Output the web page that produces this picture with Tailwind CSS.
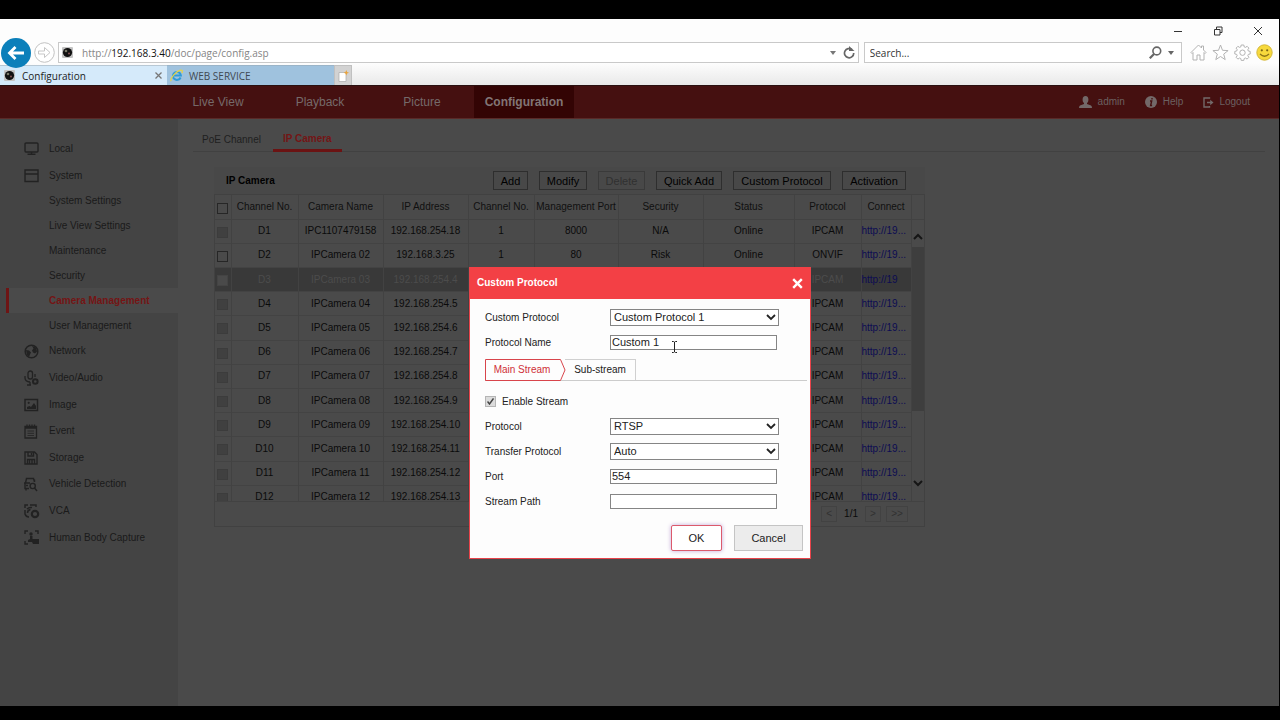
<!DOCTYPE html>
<html lang="en">
<head>
<meta charset="utf-8">
<meta name="viewport" content="width=device-width, initial-scale=1">
<title>Configuration</title>
<script src="https://cdn.jsdelivr.net/npm/@tailwindcss/browser@4"></script>
</head>
<body class="flex min-h-screen flex-col bg-black pt-[19px] pr-px pb-[14px] font-['Liberation_Sans',Arial,sans-serif] text-[10px] leading-4">

<!-- Browser window -->
<header class="bg-[#fdfdfd] font-['Open_Sans',sans-serif] text-[10px] text-[#222]">
  <div class="flex h-[23px] items-center justify-end gap-[30px] pr-[16px]">
    <button aria-label="Minimize"><svg class="block h-[10px] w-[10px]" viewBox="0 0 10 10"><path d="M1 5.500h8" stroke="#333" fill="none"/></svg></button>
    <button aria-label="Restore"><svg class="block h-[10px] w-[10px]" viewBox="0 0 10 10"><path d="M1.500 3.500h5.500v5.500h-5.500zM3.500 3.500v-2.500h5.500v5.500h-2" stroke="#333" fill="none"/></svg></button>
    <button aria-label="Close window"><svg class="block h-[10px] w-[10px]" viewBox="0 0 10 10"><path d="M1 1l8 8M9 1l-8 8" stroke="#333" fill="none"/></svg></button>
  </div>
  <div class="relative z-10 flex h-[21px] items-center pr-[6px]">
    <button aria-label="Back" class="-my-2 ml-px shrink-0"><svg class="block h-[30px] w-[30px]" viewBox="0 0 30 30"><circle cx="15" cy="15" r="15" fill="#0b7fba"/><path d="M23 15H9M14.500 9L8.500 15l6 6" stroke="#fff" stroke-width="2.800" fill="none"/></svg></button>
    <button aria-label="Forward" class="ml-[3px] shrink-0"><svg class="block h-[21px] w-[21px]" viewBox="0 0 21 21"><circle cx="10.500" cy="10.500" r="9.800" fill="#fff" stroke="#c2c2c2"/><path d="M4.500 9h6V5.500l5.500 5-5.500 5V12h-6z" stroke="#c6c6c6" fill="#fff"/></svg></button>
    <div class="ml-[3px] flex h-[21px] flex-1 items-center border border-[#c9c9c9] bg-white pl-[3px] pr-[3px]">
      <svg class="h-[11px] w-[11px]" viewBox="0 0 11 11"><rect width="11" height="11" rx="1" fill="#c4c4c4"/><circle cx="5.500" cy="5.500" r="4.600" fill="#111"/><circle cx="4" cy="4" r="1.300" fill="#776"/><circle cx="7" cy="6.500" r="1" fill="#855"/></svg>
      <p class="flex-1 pl-[9px] text-[#858585]">http://<span class="text-[#111]">192.168.3.40</span>/doc/page/config.asp</p>
      <button aria-label="Address history"><svg class="block h-1 w-[6px]" viewBox="0 0 6 4"><path d="M0 0h6L3 4z" fill="#777"/></svg></button>
      <button aria-label="Refresh" class="ml-[7px]"><svg class="block h-[13px] w-[12px]" viewBox="0 0 12 13"><path d="M9 3.600A4.600 4.600 0 1 0 10.700 7" fill="none" stroke="#666" stroke-width="1.700"/><path d="M6 0v5h5.500z" fill="#666"/></svg></button>
    </div>
    <div class="ml-[5px] flex h-[21px] w-1/4 items-center border border-[#c9c9c9] bg-white pl-[5px] pr-[7px]">
      <input aria-label="Search" placeholder="Search..." class="min-w-0 flex-1 placeholder:text-[#333] outline-none">
      <button aria-label="Run search"><svg class="block h-[13px] w-[13px]" viewBox="0 0 13 13"><circle cx="7.800" cy="5" r="3.900" fill="none" stroke="#666" stroke-width="1.600"/><path d="M5 8L.8 12.300" stroke="#666" stroke-width="2.200"/></svg></button>
      <button aria-label="Search options" class="ml-[6px]"><svg class="block h-1 w-[6px]" viewBox="0 0 6 4"><path d="M0 0h6L3 4z" fill="#666"/></svg></button>
    </div>
    <div class="ml-2 flex shrink-0 gap-[5px]">
      <button aria-label="Home"><svg class="block h-[17px] w-[17px]" viewBox="0 0 17 17"><path d="M8.500 1L1 8.500l1 1 1-1V16h4v-5h3v5h4V8.500l1 1 1-1-2.500-2.500V2h-2v2z" fill="#fff" stroke="#b3b3b3"/></svg></button>
      <button aria-label="Favorites"><svg class="block h-[17px] w-[17px]" viewBox="0 0 17 17"><path d="M8.500 1l2 5.300 5.600.3-4.400 3.500 1.500 5.500-4.700-3.100-4.700 3.100 1.500-5.500L.9 6.600l5.600-.3z" fill="#fff" stroke="#b3b3b3"/></svg></button>
      <button aria-label="Tools"><svg class="block h-[17px] w-[17px]" viewBox="0 0 17 17"><path d="M7.200 1h2.600l.4 1.900 1.300.5 1.600-1.100 1.800 1.800-1.100 1.600.5 1.300 1.900.4v2.600l-1.900.4-.5 1.300 1.100 1.600-1.800 1.800-1.600-1.100-1.300.5-.4 1.900H7.200l-.4-1.900-1.300-.5-1.600 1.100-1.800-1.800 1.100-1.600-.5-1.300L.8 10V7.400L2.700 7l.5-1.300-1.100-1.600 1.800-1.800 1.600 1.100 1.300-.5z" fill="#fff" stroke="#b3b3b3"/><circle cx="8.500" cy="8.700" r="2.700" fill="#fff" stroke="#b3b3b3"/></svg></button>
      <button aria-label="Feedback"><svg class="block h-[17px] w-[17px]" viewBox="0 0 17 17"><circle cx="8.500" cy="8.500" r="7.700" fill="#f7d93c" stroke="#d3b73a"/><circle cx="5.800" cy="6.300" r="1.100" fill="#7a6414"/><circle cx="11.200" cy="6.300" r="1.100" fill="#7a6414"/><path d="M4 10q4.500 4.500 9 0" fill="none" stroke="#8d7417" stroke-width="1.200"/></svg></button>
    </div>
  </div>
  <nav class="flex h-[22px] bg-linear-to-b from-[#fdfdfd] to-[#e9e9e9] pt-[2px]" aria-label="Browser tabs">
    <a href="#" class="flex w-[167px] items-center border-t border-[#b8c8d4] bg-[#d5eafa] pl-1">
      <svg class="h-[11px] w-[11px]" viewBox="0 0 11 11"><rect width="11" height="11" rx="1" fill="#c4c4c4"/><circle cx="5.500" cy="5.500" r="4.600" fill="#111"/><circle cx="4" cy="4" r="1.300" fill="#776"/><circle cx="7" cy="6.500" r="1" fill="#855"/></svg>
      <span class="flex-1 pl-[7px] text-[#222]">Configuration</span>
      <svg class="mr-[5px] h-[7px] w-[7px]" viewBox="0 0 7 7"><path d="M.5.500l6 6M6.500.500l-6 6" stroke="#777" stroke-width="1.300"/></svg>
    </a>
    <a href="#" class="flex w-[167px] items-center border-t border-[#9ab4c8] bg-[#9fc2de] pl-[3px] text-[#3f4a52]">
      <svg class="h-[13px] w-[13px]" viewBox="0 0 13 13"><path d="M10.600 8.500A4 4 0 1 1 10.900 6.500H4" fill="none" stroke="#2f9bd8" stroke-width="2"/><path d="M1.200 12.200C-.5 10 6 2 11 1.200c2-.2 1.400 2 .6 3" fill="none" stroke="#e4d24a" stroke-width="1.300"/></svg>
      <span class="pl-[6px]">WEB SERVICE</span>
    </a>
    <button aria-label="New tab" class="flex w-[18px] items-center justify-center border border-b-0 border-[#c0c0c0] bg-[#d2d2d2]">
      <svg class="h-[12px] w-[11px]" viewBox="0 0 11 12"><path d="M1 2.500h7v9H1z" fill="#fff" stroke="#aaa" stroke-width=".7"/><path d="M8.300 0l.8 2 1.900.8-1.900.8-.8 2-.8-2-1.900-.8 1.900-.8z" fill="#e9a33c"/></svg>
    </button>
  </nav>
</header>

<!-- Web page -->
<div class="relative flex flex-1 flex-col bg-[#4a4a4a]">
  <nav class="flex h-[34px] items-center justify-between border-t border-b border-t-[#2a1010] border-b-[#5a2a28] bg-[#451010] pr-[29px] pl-[168px] text-[#756a6a]" aria-label="Main">
    <div class="flex h-full gap-[2px] text-[12px]">
      <a href="#" class="flex w-[100px] items-center justify-center">Live View</a>
      <a href="#" class="flex w-[100px] items-center justify-center">Playback</a>
      <a href="#" class="flex w-[100px] items-center justify-center">Picture</a>
      <a href="#" class="flex w-[100px] items-center justify-center bg-[#330404] font-bold text-[#827575]">Configuration</a>
    </div>
    <div class="flex gap-5 text-[#6c6161]">
      <a href="#" class="flex items-center gap-[6px]"><svg class="h-[12px] w-[13px]" viewBox="0 0 13 12" fill="#736969"><ellipse cx="6.500" cy="3.700" rx="2.900" ry="3.600"/><path d="M5 6h3v2l4 1.500q1 .5 1 2.500H0Q0 10 1 9.500L5 8z"/></svg>admin</a>
      <a href="#" class="flex items-center gap-[6px]"><svg class="h-[12px] w-[12px]" viewBox="0 0 12 12"><circle cx="6" cy="6" r="6" fill="#736969"/><path d="M7 2v1.600M5 5h1.700L5.600 9.500h1.500" stroke="#451010" stroke-width="1.400" fill="none"/></svg>Help</a>
      <a href="#" class="flex items-center gap-[5px]"><svg class="h-[11px] w-[11px]" viewBox="0 0 11 11"><path d="M6.500 1.800V1H1v9h5.500V9" fill="none" stroke="#736969" stroke-width="1.400"/><path d="M4 4.800h3.200V2.800L10.500 5.500 7.200 8.200v-2H4z" fill="#736969"/></svg>Logout</a>
    </div>
  </nav>

  <div class="flex flex-1">
    <aside class="w-[178px] shrink-0 bg-[#444444] pt-4 text-[#1a1a1a]">
      <div class="grid h-[54px] auto-rows-fr">
        <a href="#" class="flex items-center gap-[10px] pl-6"><svg class="h-[15px] w-[15px]" viewBox="0 0 15 15" fill="none" stroke="#222" stroke-width="1.400"><rect x="1" y="2" width="13" height="9" rx="1"/><path d="M7.500 11v2M3.500 13.300h8"/></svg>Local</a>
        <a href="#" class="flex items-center gap-[10px] pl-6"><svg class="h-[15px] w-[15px]" viewBox="0 0 15 15" fill="none" stroke="#222" stroke-width="1.400"><path d="M1 2h13v11.500H1zM1 6h13"/></svg>System</a>
      </div>
      <div class="grid h-[149px] auto-rows-fr">
        <a href="#" class="flex items-center pl-[49px]">System Settings</a>
        <a href="#" class="flex items-center pl-[49px]">Live View Settings</a>
        <a href="#" class="flex items-center pl-[49px]">Maintenance</a>
        <a href="#" class="flex items-center pl-[49px]">Security</a>
        <a href="#" class="ml-[6px] flex items-center border-l-3 border-[#6e1414] bg-[#4a4a4a] pl-[40px] font-bold text-[#741515]">Camera Management</a>
        <a href="#" class="flex items-center pl-[49px]">User Management</a>
      </div>
      <div class="grid h-[213px] auto-rows-fr">
        <a href="#" class="flex items-center gap-[10px] pl-6"><svg class="h-[15px] w-[15px]" viewBox="0 0 15 15"><circle cx="7.500" cy="7.500" r="6.300" fill="none" stroke="#222" stroke-width="1.500"/><path d="M8 2l4 1.500 1 4-2 2-2-1-1-2 1.500-2zM2 6l3 .5 2 2-1 2-1 2.500-2-2z" fill="#222"/></svg>Network</a>
        <a href="#" class="flex items-center gap-[10px] pl-6"><svg class="h-[16px] w-[15px]" viewBox="0 0 15 16" fill="none" stroke="#222" stroke-width="1.300"><rect x="4" y="1" width="4.500" height="8" rx="2.200"/><path d="M1 6v2q0 3.500 5 4M11 4v3M6 12v3M3 15h4"/><circle cx="11.300" cy="11.500" r="2.300" stroke-width="2"/></svg>Video/Audio</a>
        <a href="#" class="flex items-center gap-[10px] pl-6"><svg class="h-[14px] w-[15px]" viewBox="0 0 15 14"><path d="M1 1.500h12.500v11H1z" fill="none" stroke="#222" stroke-width="1.500"/><path d="M3 11V9l2.500-1L7 9l3-4 2 3v3z" fill="#222"/><circle cx="4.700" cy="4.800" r="1.100" fill="#222"/></svg>Image</a>
        <a href="#" class="flex items-center gap-[10px] pl-6"><svg class="h-[15px] w-[15px]" viewBox="0 0 15 15" fill="none" stroke="#222" stroke-width="1.300"><path d="M1 2.500h11.500V14H1zM1 4h11.500M3 .5v3M5.500.500v3M8 .5v3M10.500.500v3"/><path d="M3.500 7h6.500M3.500 9.300h6.500M3.500 11.500h6.500" stroke-width=".8"/></svg>Event</a>
        <a href="#" class="flex items-center gap-[10px] pl-6"><svg class="h-[14px] w-[15px]" viewBox="0 0 15 14" fill="none" stroke="#222" stroke-width="1.400"><path d="M1 1h9.500L13 3.500V13H1zM4 1v4h5.500V1M3.500 13V8.500h7V13M5.500 9v4M8 9v4M7.500 2v2"/></svg>Storage</a>
        <a href="#" class="flex items-center gap-[10px] pl-6"><svg class="h-[15px] w-[15px]" viewBox="0 0 15 15" fill="none" stroke="#222" stroke-width="1.400"><path d="M1.500 6L2.500 1.500h7L10.500 5M0 6h6M1 6v5.500h4M2 11v2.500M2 8.500h2M10.500 2.500v2.500"/><circle cx="8.700" cy="9" r="2.600"/><path d="M10.500 11l2.500 3"/></svg>Vehicle Detection</a>
        <a href="#" class="flex items-center gap-[9px] pl-6"><svg class="h-[15px] w-[16px]" viewBox="0 0 16 15" fill="none" stroke="#222" stroke-width="1.500"><path d="M1 4V1h3M6 1h6v2M1 6v4q1 3 4 3M3 5q2-2 5-1.500M3.500 9q0-3 3-3.500"/><circle cx="11" cy="10" r="3.200" stroke-width="2.200"/></svg>VCA</a>
        <a href="#" class="flex items-center gap-[10px] pl-6"><svg class="h-[15px] w-[15px]" viewBox="0 0 15 15"><path d="M1 4V1h3M11 1h3v3M1 11v3h3" fill="none" stroke="#222" stroke-width="1.400"/><circle cx="7" cy="4" r="1.700" fill="#222"/><path d="M6 6h2.500v3H15v5H9l-1-2H4v-2l2-1z" fill="#222"/></svg>Human Body Capture</a>
      </div>
    </aside>

    <main class="min-w-0 flex-1 pr-[14px] pl-[15px]">
      <div class="flex h-[33px] items-end border-b border-[#414141] pl-[9px]">
        <a href="#" class="pb-[3px] text-[#1f1f1f]">PoE Channel</a>
        <a href="#" class="-mb-px ml-3 border-b-3 border-[#6b1313] px-[10px] pb-[2px] font-bold text-[#741515]">IP Camera</a>
      </div>

      <section class="mt-[15px] ml-[21px] w-[711px]">
        <div class="flex h-[27px] items-center bg-[#484848] pr-[19px] pl-3 text-[11px]">
          <h2 class="flex-1 text-[10px] font-bold text-black">IP Camera</h2>
          <div class="flex text-black">
            <button class="h-[19px] w-[35px] border border-[#2e2e2e]">Add</button>
            <button class="ml-[11px] h-[19px] w-[48px] border border-[#2e2e2e]">Modify</button>
            <button disabled class="ml-[11px] h-[19px] w-[47px] border border-[#3a3a3a] text-[#303030]">Delete</button>
            <button class="ml-[11px] h-[19px] w-[66px] border border-[#2e2e2e]">Quick Add</button>
            <button class="ml-[11px] h-[19px] w-[98px] border border-[#2e2e2e]">Custom Protocol</button>
            <button class="ml-[11px] h-[19px] w-[64px] border border-[#2e2e2e]">Activation</button>
          </div>
        </div>
        <div class="border border-[#414141]">
          <div class="flex h-[307px] overflow-hidden border-b border-[#424242]">
            <table class="h-[315px] w-[696px] shrink-0 table-fixed border-collapse text-center text-[#0a0a0a]">
              <colgroup><col class="w-[16px]"><col class="w-[67px]"><col class="w-[85px]"><col class="w-[85px]"><col class="w-[66px]"><col class="w-[84px]"><col class="w-[85px]"><col class="w-[91px]"><col class="w-[67px]"><col class="w-[50px]"></colgroup>
              <thead>
                <tr class="h-6 border-b border-[#424242] whitespace-nowrap text-[#101010] [&>th]:border-r [&>th]:border-[#424242] [&>th]:p-0 [&>th]:font-normal">
                  <th><input type="checkbox" aria-label="Select all" class="mt-[3px] ml-[2px] block h-[11px] w-[11px] appearance-none border border-[#262626]"></th>
                  <th>Channel No.</th><th>Camera Name</th><th>IP Address</th><th>Channel No.</th><th>Management Port</th><th>Security</th><th>Status</th><th>Protocol</th><th>Connect</th>
                </tr>
              </thead>
              <tbody id="cameras"></tbody>
            </table>
            <div class="flex flex-1 flex-col items-center pt-6">
              <button aria-label="Scroll up" class="flex h-[28px] w-full items-end justify-center border-t border-[#424242] pb-[7px]"><svg class="h-[7px] w-[10px]" viewBox="0 0 10 7"><path d="M1 6l4-4 4 4" fill="none" stroke="#151515" stroke-width="2"/></svg></button>
              <div class="h-[164px] w-full bg-[#3e3e3e]"></div>
              <button aria-label="Scroll down" class="mt-auto pb-[14px]"><svg class="block h-[7px] w-[10px]" viewBox="0 0 10 7"><path d="M1 1l4 4 4-4" fill="none" stroke="#151515" stroke-width="2"/></svg></button>
            </div>
          </div>
          <div class="flex h-[24px] items-center justify-end pr-4 text-[#313131]">
            <button class="h-[16px] w-[16px] border border-[#424242] leading-none">&lt;</button>
            <span class="px-[7px] text-[#0a0a0a]">1/1</span>
            <button class="h-[16px] w-[16px] border border-[#424242] leading-none">&gt;</button>
            <button class="ml-[5px] h-[16px] w-[22px] border border-[#424242] leading-none">&gt;&gt;</button>
          </div>
        </div>
      </section>
    </main>
  </div>

  <!-- Dialog over the page -->
  <div class="absolute inset-0 flex items-start justify-center pt-[182px] pl-px">
    <form role="dialog" aria-labelledby="dlg" class="w-[342px] border border-t-0 border-[#e8434a] bg-[#fdfdfd] text-[#222]">
      <div class="flex h-[32px] items-center justify-between bg-[#f34045] px-[7px]">
        <h2 id="dlg" class="font-bold text-white">Custom Protocol</h2>
        <button type="button" aria-label="Close"><svg class="block h-[11px] w-[11px]" viewBox="0 0 11 11"><path d="M1.200 1.200l8.600 8.600M9.800 1.200L1.200 9.800" stroke="#fff" stroke-width="2.400"/></svg></button>
      </div>
      <div class="px-[15px] pt-[6px] pb-[7px]">
        <div class="flex h-[25px] items-center">
          <label for="cp" class="w-[125px]">Custom Protocol</label>
          <span class="relative w-[169px]"><select id="cp" class="block h-[17px] w-full appearance-none border border-[#858585] bg-white pl-[3px] text-[11px] leading-[15px]"><option>Custom Protocol 1</option></select><svg class="pointer-events-none absolute top-[5px] right-[3px] h-[7px] w-[10px]" viewBox="0 0 10 7"><path d="M1 1l4 4 4-4" fill="none" stroke="#222" stroke-width="1.800"/></svg></span>
        </div>
        <div class="flex h-[25px] items-center">
          <label for="pn" class="w-[125px]">Protocol Name</label>
          <input id="pn" value="Custom 1" class="h-[15px] w-[167px] border border-[#858585] bg-white pb-px pl-px text-[11px] leading-3">
        </div>
        <div class="-mr-3 mt-1 flex h-[22px] border-b border-[#ccc]">
          <button type="button" class="relative w-[80px] pr-[6px] text-[#cf3038]"><svg class="absolute top-0 left-0 h-[22px] w-[81px]" viewBox="0 0 81 22"><path d="M.5.500h75l4.500 10.500-4.500 10.500H.5z" fill="none" stroke="#d8444b"/></svg>Main Stream</button>
          <button type="button" class="w-[71px] border-t border-r border-[#d0d0d0]">Sub-stream</button>
        </div>
        <div class="mt-2 flex h-[25px] items-center gap-[6px]">
          <span class="relative"><input id="es" type="checkbox" checked class="block h-[11px] w-[11px] appearance-none border border-[#b5b5b5] bg-[#dcdcdc]"><svg class="pointer-events-none absolute top-[2px] left-[2px] h-[7px] w-[7px]" viewBox="0 0 7 7"><path d="M.5 3.500l2 2.500L6.500.500" fill="none" stroke="#444" stroke-width="1.500"/></svg></span>
          <label for="es">Enable Stream</label>
        </div>
        <div class="flex h-[25px] items-center">
          <label for="pr" class="w-[125px]">Protocol</label>
          <span class="relative w-[169px]"><select id="pr" class="block h-[17px] w-full appearance-none border border-[#858585] bg-white pl-[3px] text-[11px] leading-[15px]"><option>RTSP</option></select><svg class="pointer-events-none absolute top-[5px] right-[3px] h-[7px] w-[10px]" viewBox="0 0 10 7"><path d="M1 1l4 4 4-4" fill="none" stroke="#222" stroke-width="1.800"/></svg></span>
        </div>
        <div class="flex h-[25px] items-center">
          <label for="tp" class="w-[125px]">Transfer Protocol</label>
          <span class="relative w-[169px]"><select id="tp" class="block h-[17px] w-full appearance-none border border-[#858585] bg-white pl-[3px] text-[11px] leading-[15px]"><option>Auto</option></select><svg class="pointer-events-none absolute top-[5px] right-[3px] h-[7px] w-[10px]" viewBox="0 0 10 7"><path d="M1 1l4 4 4-4" fill="none" stroke="#222" stroke-width="1.800"/></svg></span>
        </div>
        <div class="flex h-[25px] items-center">
          <label for="po" class="w-[125px]">Port</label>
          <input id="po" value="554" class="h-[15px] w-[167px] border border-[#858585] bg-white pb-px pl-px text-[11px] leading-3">
        </div>
        <div class="flex h-[25px] items-center">
          <label for="sp" class="w-[125px]">Stream Path</label>
          <input id="sp" class="h-[15px] w-[167px] border border-[#858585] bg-white pb-px pl-px text-[11px] leading-3">
        </div>
        <div class="-mr-[8px] mt-[11px] flex justify-end gap-3 text-[11px]">
          <button type="button" class="h-[26px] w-[51px] rounded-xs border border-[#dc5a6c] bg-white shadow-[0_0_4px_#c3a8d8]">OK</button>
          <button type="button" class="h-[26px] w-[69px] border border-[#c4c4c4] bg-[#ececec]">Cancel</button>
        </div>
      </div>
    </form>
    <!-- Text cursor -->
    <svg class="pointer-events-none absolute top-[256px] left-[calc(50%+31px)] h-[12px] w-[7px]" viewBox="0 0 7 12"><path d="M1 .5h1.500l1 .7 1-.7H6M3.500 1v10M1 11.500h1.500l1-.7 1 .7H6" fill="none" stroke="#222"/></svg>
  </div>
</div>

<script>
  const cameras = [
    ["D1","IPC1107479158","192.168.254.18","1","8000","N/A","Online","IPCAM"],
    ["D2","IPCamera 02","192.168.3.25","1","80","Risk","Online","ONVIF"]
  ];
  for (let n = 3; n <= 12; n++) {
    cameras.push(["D" + n, "IPCamera " + String(n).padStart(2, "0"), "192.168.254." + (n + 1), "", "", "", "", "IPCAM"]);
  }
  document.getElementById("cameras").innerHTML = cameras.map((c, i) => {
    const row = i === 2 ? "bg-[#393939] text-[#4c4c4c]" : "";
    const box = i === 1 ? "border-[#262626]" : i === 2 ? "border-[#444] bg-[#4a4a4a]" : "border-[#3c3c3c] bg-[#404040]";
    return `<tr class="h-6 border-b border-[#434343] [&>td]:border-r [&>td]:border-[#424242] [&>td]:p-0 ${row}">
      <td><input type="checkbox" aria-label="Select ${c[0]}" ${i === 1 ? "" : "disabled"} class="mt-[2px] ml-[2px] block h-[11px] w-[11px] appearance-none border ${box}"></td>
      ${c.map(t => `<td>${t}</td>`).join("")}
      <td class="text-left text-[#0c0c52]"><a href="#">${i === 2 ? "http://19" : "http://19..."}</a></td></tr>`;
  }).join("");
</script>
</body>
</html>
